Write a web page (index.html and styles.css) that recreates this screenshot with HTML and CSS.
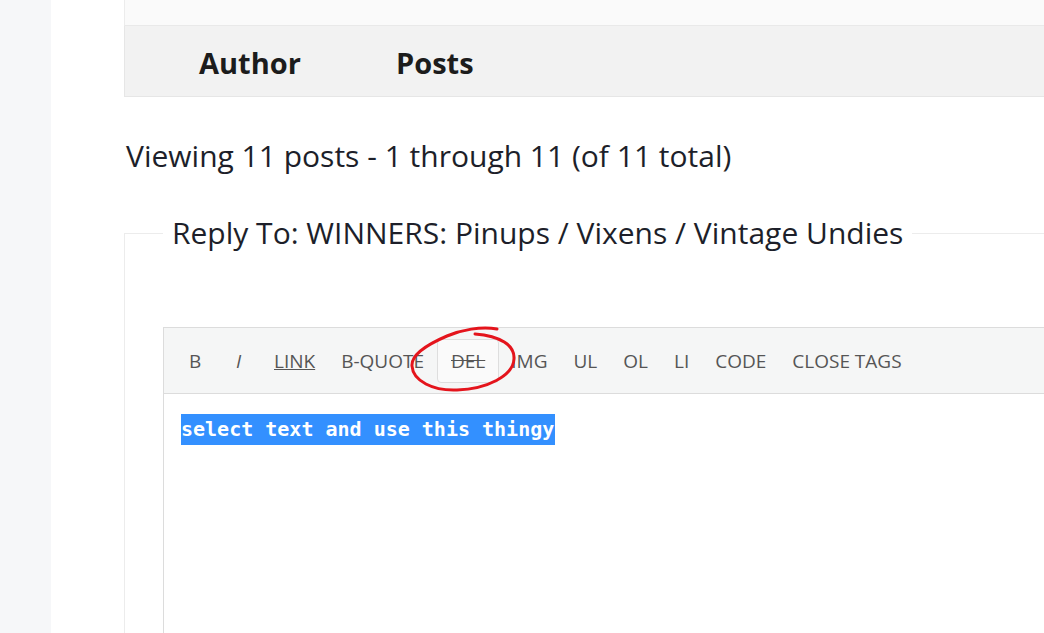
FILE: index.html
```html
<!DOCTYPE html>
<html>
<head>
<meta charset="utf-8">
<link rel="stylesheet" href="styles.css">
</head>
<body>
<div class="page">
  <aside class="side"></aside>
  <main class="main">
    <div class="topbox"></div>
    <div class="thead">
      <span class="th-author">Author</span>
      <span class="th-posts">Posts</span>
    </div>
    <p class="viewing">Viewing 11 posts - 1 through 11 (of 11 total)</p>
    <fieldset class="reply">
      <legend class="reply-legend">Reply To: WINNERS: Pinups / Vixens / Vintage Undies</legend>
      <div class="editor">
        <div class="toolbar">
          <span class="qt qt-b">B</span>
          <span class="qt qt-i">I</span>
          <span class="qt qt-u">LINK</span>
          <span class="qt">B-QUOTE</span>
          <span class="qt qt-del"><span class="del-text">DEL</span></span>
          <span class="qt">IMG</span>
          <span class="qt">UL</span>
          <span class="qt">OL</span>
          <span class="qt">LI</span>
          <span class="qt">CODE</span>
          <span class="qt">CLOSE TAGS</span>
          <svg class="scribble" width="124" height="76" viewBox="0 0 124 76">
            <path d="M 92 8 C 76 5, 56 9, 42 15 C 21 24, 6 34, 7 45 C 8 60, 28 70, 52 69 C 82 68, 108 55, 109 38 C 110 24, 95 15, 70 13" fill="none" stroke="#e4141c" stroke-width="3" stroke-linecap="round"/>
          </svg>
        </div>
        <div class="textarea"><span class="sel">select text and use this thingy</span></div>
      </div>
    </fieldset>
  </main>
</div>
</body>
</html>
```

FILE: styles.css
```css
* { box-sizing: border-box; }
html, body { margin: 0; padding: 0; background: #fff; }
body { font-family: "Open Sans", "Noto Sans", sans-serif; color: #1d1f2a; overflow: hidden; }
.page { display: flex; width: 1044px; height: 633px; }
.side { width: 51px; flex: none; background: #f6f7f9; }
.main { flex: 1; padding-left: 73px; min-width: 0; }
.topbox { height: 26px; background: #fafafa; border-left: 1px solid #ececec; border-bottom: 1px solid #e9e9e9; }
.thead { height: 71px; background: #f2f2f2; border-left: 1px solid #e6e6e6; border-bottom: 1px solid #e6e6e6; display: flex; align-items: center; padding: 3px 0 0 74px; font-weight: 700; font-size: 29px; color: #1c1c1c; }
.th-author { width: 197px; }
.viewing { margin: 0; padding: 39px 0 0 2px; font-size: 30px; line-height: 40px; color: #1d1f2a; }
.reply { margin: 37px 0 0 0; border: 1px solid #ececec; border-right: none; border-bottom: none; padding: 0 0 0 38px; min-width: 0; }
.reply-legend { margin-left: 0; padding: 0 9px; font-size: 30px; line-height: 40px; color: #1d1f2a; }
.editor { margin-top: 74px; border: 1px solid #dcdcdc; border-right: none; }
.toolbar { position: relative; height: 66px; background: #f5f6f6; border-bottom: 1px solid #dcdcdc; display: flex; align-items: center; padding-left: 12px; font-size: 19px; color: #555; }
.qt { padding: 0 13px; line-height: 42px; }
.qt-b { width: 47px; }
.qt-i { width: 38px; font-style: italic; }
.qt-u { text-decoration: underline; }
.qt-del { background: #fafafa; border: 1px solid #dedede; border-radius: 4px; height: 44px; display: flex; align-items: center; margin-right: -1px; }
.del-text { text-decoration: line-through; }
.scribble { position: absolute; left: 241px; top: -7px; }
.textarea { height: 240px; padding: 20px 0 0 17px; }
.sel { background: #3390ff; color: #fff; font-family: "DejaVu Sans Mono", monospace; font-weight: 700; font-size: 20px; line-height: 31px; display: inline-block; padding-right: 1px; }
```
